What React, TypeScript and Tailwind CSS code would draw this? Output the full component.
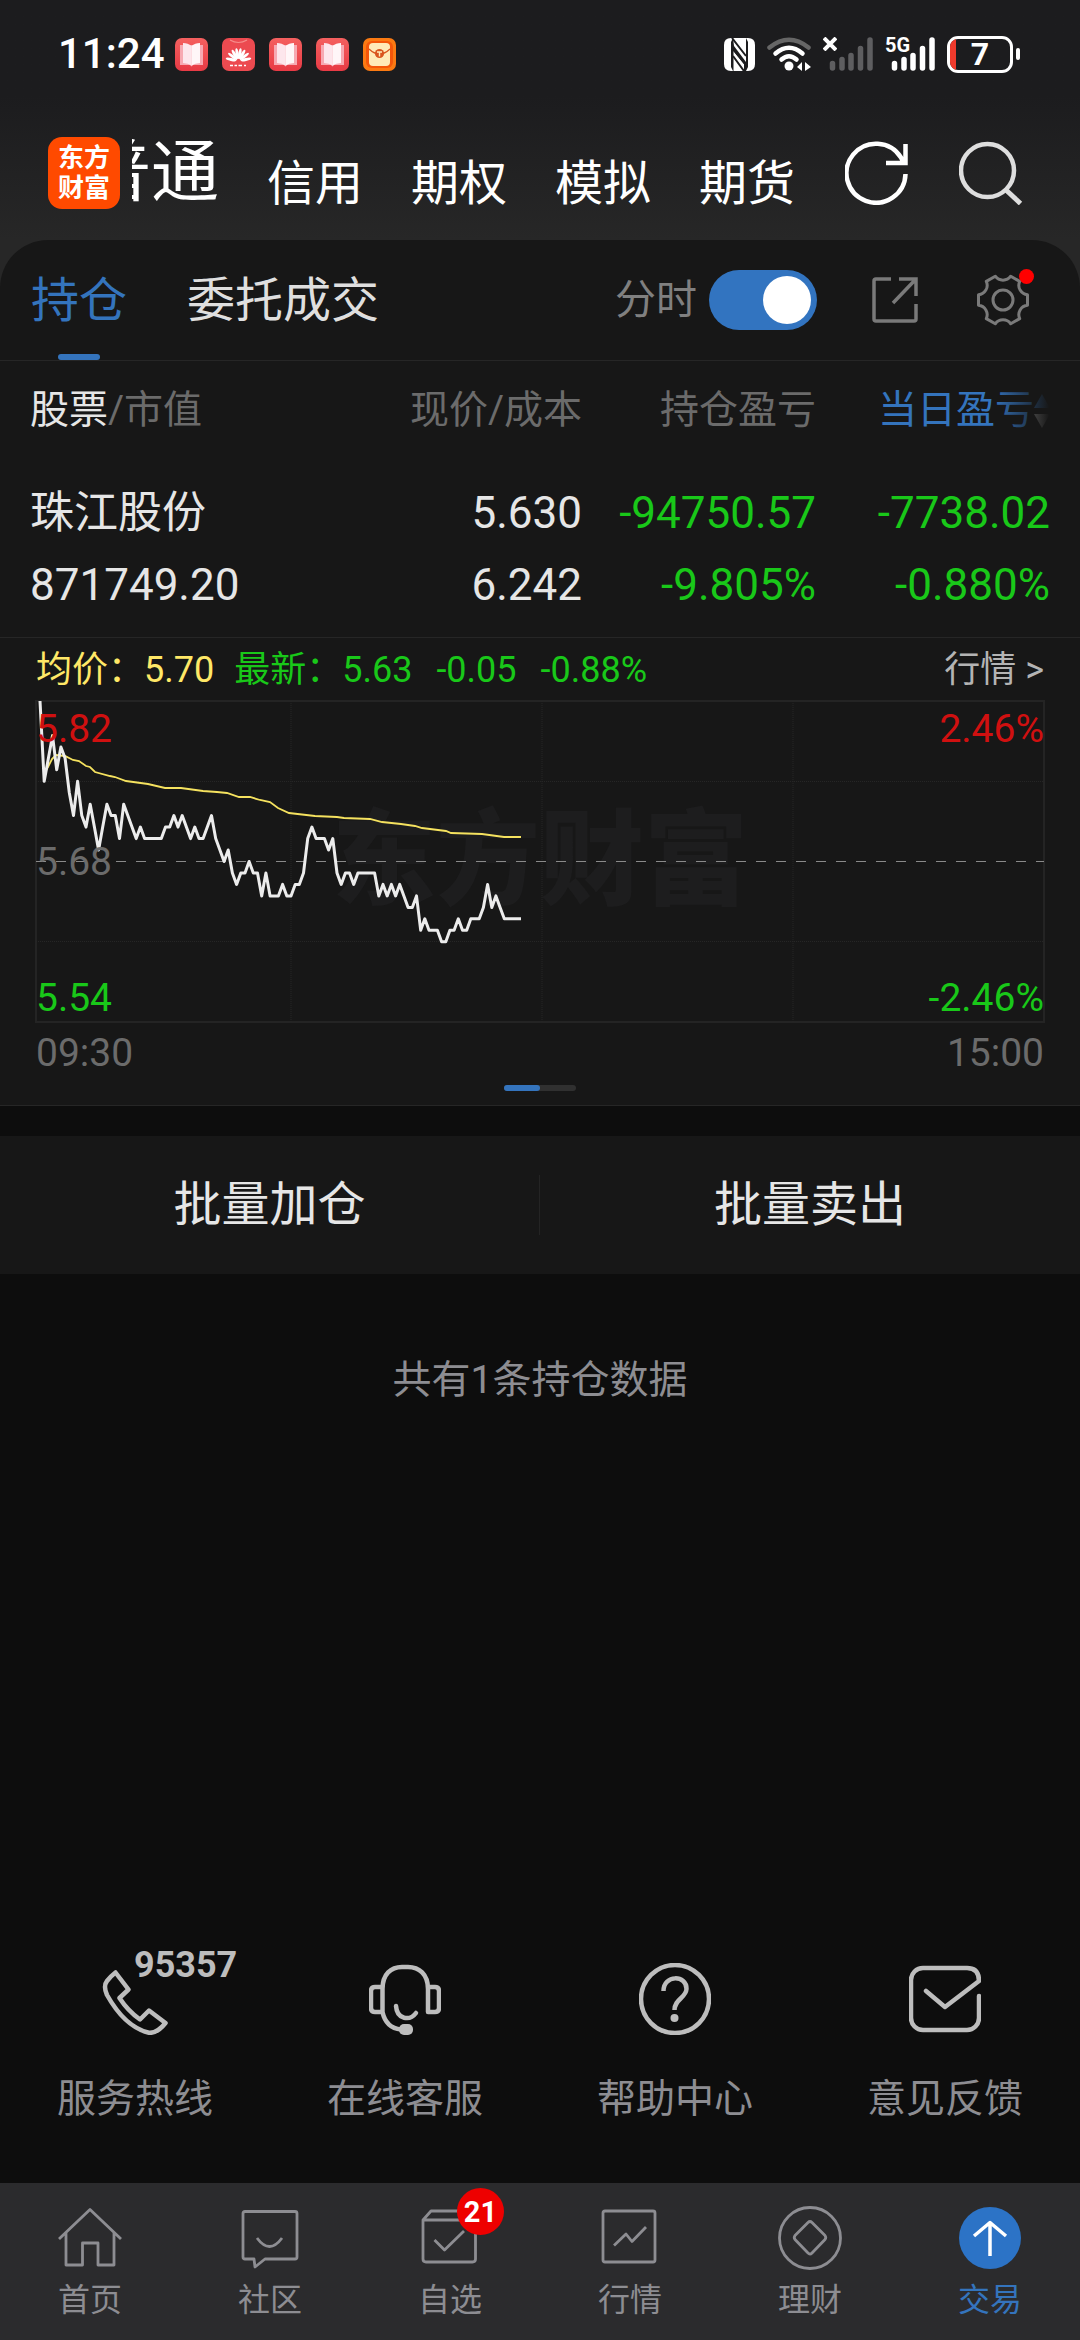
import React, { useState } from 'react';

interface Service {
  label: string;
  icon: React.ReactNode;
  extra?: string;
}

interface TabItem {
  label: string;
  icon: React.ReactNode;
  active?: boolean;
  badge?: number;
}

// minute prices in cents, from 09:30
const PRICES = [
  582, 575, 577, 579, 576, 578, 577, 574, 572, 575, 572, 571, 573, 571, 569, 571, 573, 572, 572, 570,
  573, 572, 571, 570, 571, 570, 570, 570, 570, 570, 571, 571, 572, 571, 572, 571, 570, 571, 570, 570,
  571, 572, 570, 569, 568, 569, 567, 566, 567, 567, 568, 567, 567, 565, 567, 565, 565, 565, 566, 565,
  565, 566, 566, 567, 570, 571, 570, 570, 570, 569, 570, 567, 566, 567, 567, 566, 567, 567, 567, 567,
  567, 565, 566, 565, 566, 565, 566, 565, 564, 564, 565, 562, 563, 562, 562, 562, 561, 561, 562, 562,
  563, 562, 562, 563, 563, 563, 564, 566, 564, 565, 564, 563, 563, 563, 563, 563,
];

const AVERAGE =
  '9,71 12,66 16,58 20,54 29,55 37,59 43,60 50,65 54,66 59,71 74,75 79,76 90,80 112,83 129,87 145,87 167,90 181,91 191,92 203,96 214,96 224,99 234,101 242,107 253,112 279,115 301,116 308,117 334,118 346,121 365,123 379,125 386,127 410,130 415,132 446,133 468,136 485,136';

const CHART_W = 1008;
const CHART_H = 321;

const pricePoints = PRICES.map((p, i) => {
  const x = 4 + i * 4.183;
  const y = CHART_H / 2 - ((p - 568) * CHART_H) / 28;
  return `${x.toFixed(1)},${y.toFixed(1)}`;
}).join(' ');

const BookIcon = () => (
  <svg viewBox="0 0 33 33" className="h-[33px] w-[33px]">
    <defs>
      <linearGradient id="book" x1="0" y1="0" x2="0" y2="1">
        <stop offset="0" stopColor="#f4605f" />
        <stop offset="1" stopColor="#e83a45" />
      </linearGradient>
    </defs>
    <rect width="33" height="33" rx="7" fill="url(#book)" />
    <path d="M5 7H28V27H18L16.500 28.500L15 27H5Z" fill="#f7a9b2" />
    <path d="M8 5Q13 5 16.500 8V27.500Q13 25 8 25Z" fill="#fde6ec" />
    <path d="M25 5Q20 5 16.500 8V27.500Q20 25 25 25Z" fill="#fff6f8" />
  </svg>
);

const HuaweiIcon = () => (
  <svg viewBox="0 0 33 33" className="h-[33px] w-[33px]">
    <rect width="33" height="33" rx="7" fill="#ec4a50" />
    <path d="M8 2Q16.500 7 25 2" fill="none" stroke="#f58d8b" strokeWidth="1.200" />
    <g fill="#fff">
      {[-78, -52, -30, -10, 10, 30, 52, 78].map((deg) => (
        <ellipse key={deg} cx="16.500" cy="15.500" rx="1.500" ry="5.500" transform={`rotate(${deg} 16.5 23)`} />
      ))}
    </g>
    <path d="M8 27.500H11M12.500 27.500H15M16.500 27.500H20M22 27.500H24" stroke="#fff" strokeWidth="1.500" />
  </svg>
);

const PacketIcon = () => (
  <svg viewBox="0 0 33 33" className="h-[33px] w-[33px]">
    <rect width="33" height="33" rx="7" fill="#fb7a12" />
    <rect x="3" y="3" width="27" height="27" rx="6" fill="#f4560a" />
    <rect x="6" y="5" width="21" height="23" rx="4" fill="#ffeab8" />
    <path d="M6 11Q16.500 21 27 11" fill="none" stroke="#d9541e" strokeWidth="1.200" />
    <circle cx="16.500" cy="15.500" r="4.600" fill="#d9541e" />
    <path d="M14 14H19M16.500 14V18.500" stroke="#ffeab8" strokeWidth="1.400" />
  </svg>
);

const NfcIcon = () => (
  <svg viewBox="0 0 31 33" className="h-[33px] w-[31px]">
    <path d="M7 0H9L7 4V29L9 33H7Q0 33 0 26V7Q0 0 7 0Z" fill="#fff" />
    <path d="M24 0H22L24 4V29L22 33H24Q31 33 31 26V7Q31 0 24 0Z" fill="#fff" />
    <path d="M9 0H22V24L10 8ZM9.500 13L20 26V33H9.500Z" fill="#fff" />
    <path d="M8 0L22 18M9 11L22 27M9 18L20 33" stroke="#1c1c1e" strokeWidth="2" />
  </svg>
);

const WifiIcon = () => (
  <svg viewBox="0 0 44 34" className="h-[34px] w-[44px]" fill="none" strokeWidth="4.500" strokeLinecap="round">
    <path d="M2.500 10.500Q22 -5 41.500 10.500" stroke="#666" />
    <path d="M8.500 16.500Q22 5 35.500 16.500" stroke="#fff" />
    <path d="M14.500 22.500Q22 16 29.500 22.500" stroke="#fff" />
    <circle cx="22" cy="29" r="4.500" fill="#fff" />
    <path d="M30 30L35 25V34ZM44 30L38 25V34Z" fill="#fff" />
  </svg>
);

const SignalBars = ({ color }: { color: string }) => (
  <svg viewBox="0 0 50 34" className="h-[34px] w-[50px]" stroke={color} strokeWidth="5.500" strokeLinecap="round">
    <path d="M9.500 26.500V31M19 22.500V31M28 18.500V31M37.500 11.500V31M47 3V31" />
  </svg>
);

const StatusBar = () => (
  <div className="flex h-[108px] items-center pr-[60px] pl-[58px]">
    <span className="text-[42px] leading-[56px] font-medium">11:24</span>
    <div className="ml-[10px] flex gap-[14px]">
      <BookIcon />
      <HuaweiIcon />
      <BookIcon />
      <BookIcon />
      <PacketIcon />
    </div>
    <div className="ml-auto flex items-center gap-3">
      <NfcIcon />
      <WifiIcon />
      <div className="relative">
        <SignalBars color="#5e5e60" />
        <svg viewBox="0 0 14 14" className="absolute top-0 left-0 h-[14px] w-[14px]" stroke="#fff" strokeWidth="4">
          <path d="M1 1L13 13M13 1L1 13" />
        </svg>
      </div>
      <div className="relative">
        <SignalBars color="#fff" />
        <span className="absolute top-0 left-0 bg-[#1c1c1e] text-[20px] leading-[16px] font-bold">5G</span>
      </div>
      <div className="flex items-center gap-[3px]">
        <div className="relative flex h-[37px] w-[66px] items-center justify-center overflow-hidden rounded-[11px] border-[3px] border-white text-[32px] leading-[36px] font-bold">
          <span className="absolute inset-y-0 left-0 w-[6px] bg-[#f03a2c]" />7
        </div>
        <span className="h-[12px] w-[4px] rounded-full bg-white" />
      </div>
    </div>
  </div>
);

const TopNav = () => (
  <div className="flex h-[132px] items-center pr-[57px] pb-[2px] pl-12">
    <a
      href="#home"
      className="grid h-[72px] w-[72px] shrink-0 place-content-center rounded-[14px] bg-[#ff4a00] text-center text-[26px] leading-[30px] font-bold"
    >
      东方
      <br />
      财富
    </a>
    <nav className="ml-3 flex items-end gap-12 text-[48px] leading-[76px]">
      <button className="flex w-[87px] justify-end overflow-hidden text-[68px] leading-[98px]">
        <span className="shrink-0">普通</span>
      </button>
      <button>信用</button>
      <button>期权</button>
      <button>模拟</button>
      <button>期货</button>
    </nav>
    <div className="ml-auto flex gap-[50px]">
      <button aria-label="刷新">
        <svg viewBox="0 0 64 64" className="h-16 w-16" fill="none" stroke="#fff" strokeWidth="4.500">
          <path d="M60.500 33A29.500 29.500 0 1 1 56 16.500L58 20.500M60.500 3V22H41" />
        </svg>
      </button>
      <button aria-label="搜索">
        <svg viewBox="0 0 64 64" className="h-16 w-16" fill="none" stroke="#dedede" strokeWidth="4.500">
          <circle cx="28.500" cy="29.500" r="26.500" />
          <path d="M47 49L61.500 62.500" strokeWidth="5" />
        </svg>
      </button>
    </div>
  </div>
);

const PanelTabs = () => {
  const [minute, setMinute] = useState(true);

  return (
    <div className="flex h-[121px] items-stretch border-b border-[#262626] pr-[50px] pl-[31px] text-[48px] leading-[60px]">
      <button className="flex flex-col items-center justify-between pt-[31px] text-[#3474bd]">
        <span>持仓</span>
        <span className="h-[6px] w-[42px] rounded-full bg-[#3474bd]" />
      </button>
      <button className="ml-[60px] self-start pt-[31px] text-[#dfdfdf]">委托成交</button>
      <div className="ml-auto flex items-center">
        <label htmlFor="minute" className="text-[41px] text-[#808080]">
          分时
        </label>
        <input
          id="minute"
          type="checkbox"
          checked={minute}
          onChange={(e) => setMinute(e.target.checked)}
          className="ml-3 flex h-[60px] w-[108px] appearance-none items-center rounded-full bg-[#444] px-[6px] before:h-12 before:w-12 before:rounded-full before:bg-white checked:justify-end checked:bg-[#3274c0]"
        />
        <button aria-label="分享" className="ml-[55px]">
          <svg viewBox="0 0 46 46" className="h-[46px] w-[46px]" fill="none" stroke="#7a7a7a" strokeWidth="3.500">
            <path d="M19 2H4Q2 2 2 4V42Q2 44 4 44H42Q44 44 44 42V27M27 2H44V19M44 2L21 26" />
          </svg>
        </button>
        <button aria-label="设置" className="relative ml-[58px]">
          <svg viewBox="0 0 54 54" className="h-[54px] w-[54px]" fill="none" stroke="#7a7a7a" strokeWidth="3" strokeLinejoin="round">
            <path d="M51.500 32.200A9.500 9.500 0 0 0 43.700 45.600L34.700 50.800A9.500 9.500 0 0 0 19.300 50.800L10.300 45.600A9.500 9.500 0 0 0 2.500 32.200V21.800A9.500 9.500 0 0 0 10.300 8.400L19.300 3.200A9.500 9.500 0 0 0 34.700 3.200L43.700 8.400A9.500 9.500 0 0 0 51.500 21.800Z" />
            <circle cx="27" cy="27" r="10" />
          </svg>
          <span className="absolute -top-1 -right-1 h-[15px] w-[15px] rounded-full bg-[#ff0000]" />
        </button>
      </div>
    </div>
  );
};

const Holdings = () => (
  <div className="relative border-b border-[#262626] pb-[16px]">
    <table className="w-full table-fixed">
      <colgroup>
        <col />
        <col className="w-[234px]" />
        <col className="w-[234px]" />
        <col className="w-[264px]" />
      </colgroup>
      <thead>
        <tr className="h-[116px] text-right align-top text-[39px] leading-[99px] whitespace-nowrap text-[#6b6b6b]">
          <th className="pl-[30px] text-left font-normal">
            <span className="text-[#e6e6e6]">股票</span>/市值
          </th>
          <th className="font-normal">现价/成本</th>
          <th className="font-normal">持仓盈亏</th>
          <th className="pr-[30px] font-normal">
            <button className="flex w-full items-center justify-end text-[#3474bd]">
              当日盈亏
              <svg viewBox="0 0 16 34" className="h-[34px] w-4">
                <path d="M8 0L16 14H0Z" fill="#3474bd" />
                <path d="M8 34L16 20H0Z" fill="#b0b0b0" />
              </svg>
            </button>
          </th>
        </tr>
      </thead>
      <tbody>
        <tr className="text-right text-[44px] leading-[72px] text-[#e6e6e6]">
          <td className="pl-[30px] text-left">
            <div>珠江股份</div>
            <div>871749.20</div>
          </td>
          <td>
            <div>5.630</div>
            <div>6.242</div>
          </td>
          <td className="text-[#19c819]">
            <div>-94750.57</div>
            <div>-9.805%</div>
          </td>
          <td className="pr-[30px] text-[#19c819]">
            <div>-7738.02</div>
            <div>-0.880%</div>
          </td>
        </tr>
      </tbody>
    </table>
    <div className="pointer-events-none absolute top-0 right-0 h-24 w-[88px] bg-linear-to-r from-transparent to-[#171717] to-65%" />
  </div>
);

const MinuteChart = () => (
  <section className="border-b border-[#262626] px-9 pb-[14px]">
    <div className="flex h-[63px] items-center text-[36px] leading-[48px] whitespace-pre">
      <span className="text-[#ffe867]">均价：5.70</span>
      <span className="ml-5 text-[#19c819]">最新：5.63</span>
      <span className="ml-6 text-[#19c819]">-0.05</span>
      <span className="ml-6 text-[#19c819]">-0.88%</span>
      <a href="#quote" className="ml-auto text-[#b4b4b4]">
        行情 &gt;
      </a>
    </div>
    <div className="relative text-[39px] leading-[48px]">
      <div className="absolute inset-0 flex items-center justify-center text-[104px] leading-[104px] font-black text-[#1d1d1e]">
        东方财富
      </div>
      <svg
        viewBox={`0 0 ${CHART_W} ${CHART_H}`}
        preserveAspectRatio="none"
        className="relative h-[321px] w-full overflow-visible"
        fill="none"
      >
        <rect width={CHART_W} height={CHART_H} stroke="#242424" strokeWidth="2" />
        <path d="M0 80.500H1008M0 240.500H1008M255 0V321M506 0V321M757 0V321" stroke="#262626" strokeDasharray="1 1" />
        <path d="M0 160.500H1008" stroke="#8a8a8a" strokeDasharray="10 10" />
        <polyline points={AVERAGE} stroke="#f5e25f" strokeWidth="1.800" />
        <polyline points={pricePoints} stroke="#ececec" strokeWidth="3" strokeLinejoin="round" />
      </svg>
      <span className="absolute top-1 left-0 text-[#d01010]">5.82</span>
      <span className="absolute top-1/2 left-0 -translate-y-1/2 text-[#6b6b6b]">5.68</span>
      <span className="absolute bottom-0 left-0 text-[#19c819]">5.54</span>
      <span className="absolute top-1 right-0 text-[#d01010]">2.46%</span>
      <span className="absolute right-0 bottom-0 text-[#19c819]">-2.46%</span>
    </div>
    <div className="flex justify-between pt-[3px] text-[39px] leading-[56px] text-[#6b6b6b]">
      <span>09:30</span>
      <span>15:00</span>
    </div>
    <div className="mt-1 flex justify-center">
      <div className="flex h-[6px] w-[72px] rounded-full bg-[#303030]">
        <span className="w-1/2 rounded-full bg-[#3474bd]" />
      </div>
    </div>
  </section>
);

const SERVICES: Service[] = [
  {
    label: '服务热线',
    extra: '95357',
    icon: (
      <path d="M16.500 9.500L29.500 26.500L20.500 35Q29 48 41 56.500L50 47.500L66.500 60Q58 70.500 50 69.800Q26 64 8 32Q4 23 8 18Q12 13 16.500 9.500Z" />
    ),
  },
  {
    label: '在线客服',
    icon: (
      <>
        <path d="M13.500 49V26C13.500 11 22 4 33 4H39C50 4 59 11 59 26V49H66Q70 49 70 45V28Q70 24 66 24H59M13.500 24H6Q2 24 2 28V45Q2 49 6 49H13.500Q17 65 32 66.500" />
        <path d="M27 43C28 57 41 58 47 50" strokeLinecap="round" />
        <rect x="30" y="61" width="14" height="11" rx="5" fill="#bdbdbd" stroke="none" />
      </>
    ),
  },
  {
    label: '帮助中心',
    icon: (
      <>
        <circle cx="36" cy="36" r="34" />
        <path d="M24.500 28C24.500 11 48 12 47.500 26C47 35 35.500 36 35.500 47" />
        <circle cx="35.500" cy="55" r="4" fill="#bdbdbd" stroke="none" />
      </>
    ),
  },
  {
    label: '意见反馈',
    icon: (
      <path
        d="M70 33V55A12 12 0 0 1 58 67H14A12 12 0 0 1 2 55V17A12 12 0 0 1 14 5H58Q70 5 70 18L36 44L17 28"
        strokeLinecap="round"
      />
    ),
  },
];

const TABS: TabItem[] = [
  { label: '首页', icon: <path d="M1 33L32 3.500L63 33M8 27V59H24.500V37H40V59H56V27" /> },
  {
    label: '社区',
    icon: <path d="M7 5.500H57Q59 5.500 59 7.500V51Q59 53 57 53H27L17 61L16 53H7Q5 53 5 51V7.500Q5 5.500 7 5.500ZM19 32Q31.500 49 44 32" />,
  },
  {
    label: '自选',
    badge: 21,
    icon: <path d="M5 14L13 5H50L57.500 14V53Q57.500 56 54.500 56H8Q5 56 5 53ZM5 14H57M16.500 34L26.500 44L46 25" />,
  },
  {
    label: '行情',
    icon: <path d="M7 5H55Q57 5 57 7V54Q57 56 55 56H7Q5 56 5 54V7Q5 5 7 5ZM16 39.500L28 28L34 35.500L48 21" />,
  },
  {
    label: '理财',
    icon: (
      <>
        <circle cx="32" cy="32" r="30.500" />
        <path d="M30 16.500Q32 14.500 34 16.500L47 29.500Q48.500 31.500 47 33.500L34 47Q32 49 30 47L17 33.500Q15.500 31.500 17 29.500Z" />
      </>
    ),
  },
  {
    label: '交易',
    active: true,
    icon: (
      <>
        <circle cx="32" cy="32" r="31" fill="#2c73c6" stroke="none" />
        <path d="M32 50V16.500M16 30L32 16.500L48 30" stroke="#fff" strokeWidth="3.500" />
      </>
    ),
  },
];

const App: React.FC = () => {
  return (
    <div className="flex min-h-screen flex-col bg-[#0d0d0d] font-[Roboto,'Noto_Sans_CJK_SC',sans-serif] text-white">
      <header className="bg-linear-to-b from-[#1c1c1e] from-40% to-[#272727]">
        <StatusBar />
        <TopNav />
      </header>

      <div className="bg-[#272727]">
        <main className="rounded-t-[48px] bg-[#171717]">
          <PanelTabs />
          <Holdings />
          <MinuteChart />
        </main>
      </div>

      <div className="mt-[30px] grid grid-cols-2 items-center bg-[#171717] text-[48px] leading-[60px] text-[#e6e6e6]">
        <button className="my-[39px] border-r border-[#242424]">批量加仓</button>
        <button>批量卖出</button>
      </div>
      <p className="mt-[78px] text-center text-[39px] leading-[56px] text-[#8d8d92]">共有1条持仓数据</p>

      <div className="mt-auto grid grid-cols-4 pb-[56px]">
        {SERVICES.map((s) => (
          <button key={s.label} className="flex flex-col items-center gap-9 text-[39px] leading-[56px] text-[#8d8d92]">
            <span className="relative">
              <svg viewBox="0 0 72 72" className="h-[72px] w-[72px]" fill="none" stroke="#bdbdbd" strokeWidth="4.500" strokeLinejoin="round">
                {s.icon}
              </svg>
              {s.extra && (
                <span className="absolute -top-4 left-[35px] text-[36px] leading-[36px] font-bold text-[#bdbdbd]">
                  {s.extra}
                </span>
              )}
            </span>
            <span>{s.label}</span>
          </button>
        ))}
      </div>

      <nav className="grid grid-cols-6 bg-[#2b2b2d] pt-[23px] pb-[18px] text-[32px] leading-[44px] text-[#8d8d92]">
        {TABS.map((t) => (
          <a key={t.label} href="#tab" className="flex flex-col items-center gap-2">
            <span className="relative">
              <svg viewBox="0 0 64 64" className="h-16 w-16" fill="none" stroke="#8d8d92" strokeWidth="2.800" strokeLinejoin="round">
                {t.icon}
              </svg>
              {t.badge && (
                <span className="absolute -top-[18px] -right-[22px] flex h-[47px] w-[47px] items-center justify-center rounded-full bg-[#ee0000] text-[29px] font-bold text-white">
                  {t.badge}
                </span>
              )}
            </span>
            <span className={t.active ? 'text-[#3474bd]' : ''}>{t.label}</span>
          </a>
        ))}
      </nav>
    </div>
  );
};

export default App;
